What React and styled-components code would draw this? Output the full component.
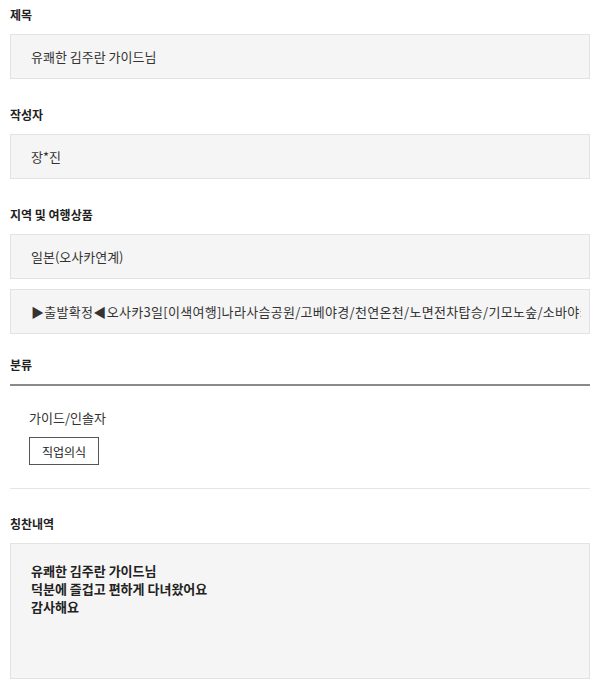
import styled, { createGlobalStyle } from "styled-components";

const GlobalStyle = createGlobalStyle`
  * { box-sizing: border-box; }
  body {
    margin: 0;
    background: #ffffff;
    font-family: "Noto Sans CJK KR", "Noto Sans", sans-serif;
    color: #222;
  }
`;

const praiseLines = ["유쾌한 김주란 가이드님", "덕분에 즐겁고 편하게 다녀왔어요", "감사해요"];

export default function App() {
  return (
    <Page>
      <GlobalStyle />
      <Section>
        <Label>제목</Label>
        <Field>
          <FieldText>유쾌한 김주란 가이드님</FieldText>
        </Field>
      </Section>

      <Section>
        <Label>작성자</Label>
        <Field>
          <FieldText>장*진</FieldText>
        </Field>
      </Section>

      <Section $gap={22}>
        <Label>지역 및 여행상품</Label>
        <FieldStack>
          <Field>
            <FieldText>일본(오사카연계)</FieldText>
          </Field>
          <Field>
            <FieldText $wide>
              ▶출발확정◀오사카3일[이색여행]나라사슴공원/고베야경/천연온천/노면전차탑승/기모노숲/소바야키체험
            </FieldText>
          </Field>
        </FieldStack>
      </Section>

      <Category>
        <CategoryTitle>분류</CategoryTitle>
        <CategoryBody>
          <CategoryName>가이드/인솔자</CategoryName>
          <Tag>직업의식</Tag>
        </CategoryBody>
      </Category>

      <Section>
        <Label>칭찬내역</Label>
        <TextBox>
          {praiseLines.map((line) => (
            <div key={line}>{line}</div>
          ))}
        </TextBox>
      </Section>
    </Page>
  );
}

const Page = styled.div`
  width: 600px;
  padding: 6px 10px 0;
`;

const Section = styled.section`
  display: flex;
  flex-direction: column;
  gap: 10px;
  margin-bottom: ${(p) => p.$gap ?? 27}px;
`;

const Label = styled.h3`
  margin: 0;
  font-size: 12px;
  line-height: 18px;
  font-weight: 700;
  color: #222;
`;

const FieldStack = styled.div`
  display: flex;
  flex-direction: column;
  gap: 10px;
`;

const Field = styled.div`
  height: 45px;
  display: flex;
  align-items: center;
  padding: 0 8px 0 20px;
  background: #f5f5f5;
  border: 1px solid #e3e3e3;
`;

const FieldText = styled.span`
  flex: 1;
  min-width: 0;
  font-size: 13px;
  letter-spacing: ${(p) => (p.$wide ? "0.3px" : "0")};
  color: #333;
  white-space: nowrap;
  overflow: hidden;
`;

const Category = styled.section`
  margin-bottom: 26px;
`;

const CategoryTitle = styled.h3`
  margin: 0;
  padding-bottom: 10px;
  font-size: 12px;
  line-height: 18px;
  font-weight: 700;
  color: #222;
  border-bottom: 2px solid #8a8a8a;
`;

const CategoryBody = styled.div`
  display: flex;
  flex-direction: column;
  align-items: flex-start;
  gap: 10px;
  padding: 23px 19px 23px;
  border-bottom: 1px solid #e6e6e6;
`;

const CategoryName = styled.div`
  font-size: 13px;
  line-height: 18px;
  color: #333;
`;

const Tag = styled.div`
  height: 28px;
  padding: 0 12px;
  display: flex;
  align-items: center;
  border: 1px solid #555;
  background: #fff;
  font-size: 12px;
  color: #222;
`;

const TextBox = styled.div`
  height: 136px;
  padding: 18px 20px;
  background: #f5f5f5;
  border: 1px solid #e3e3e3;
  font-size: 13px;
  line-height: 18px;
  font-weight: 700;
  color: #222;
`;
